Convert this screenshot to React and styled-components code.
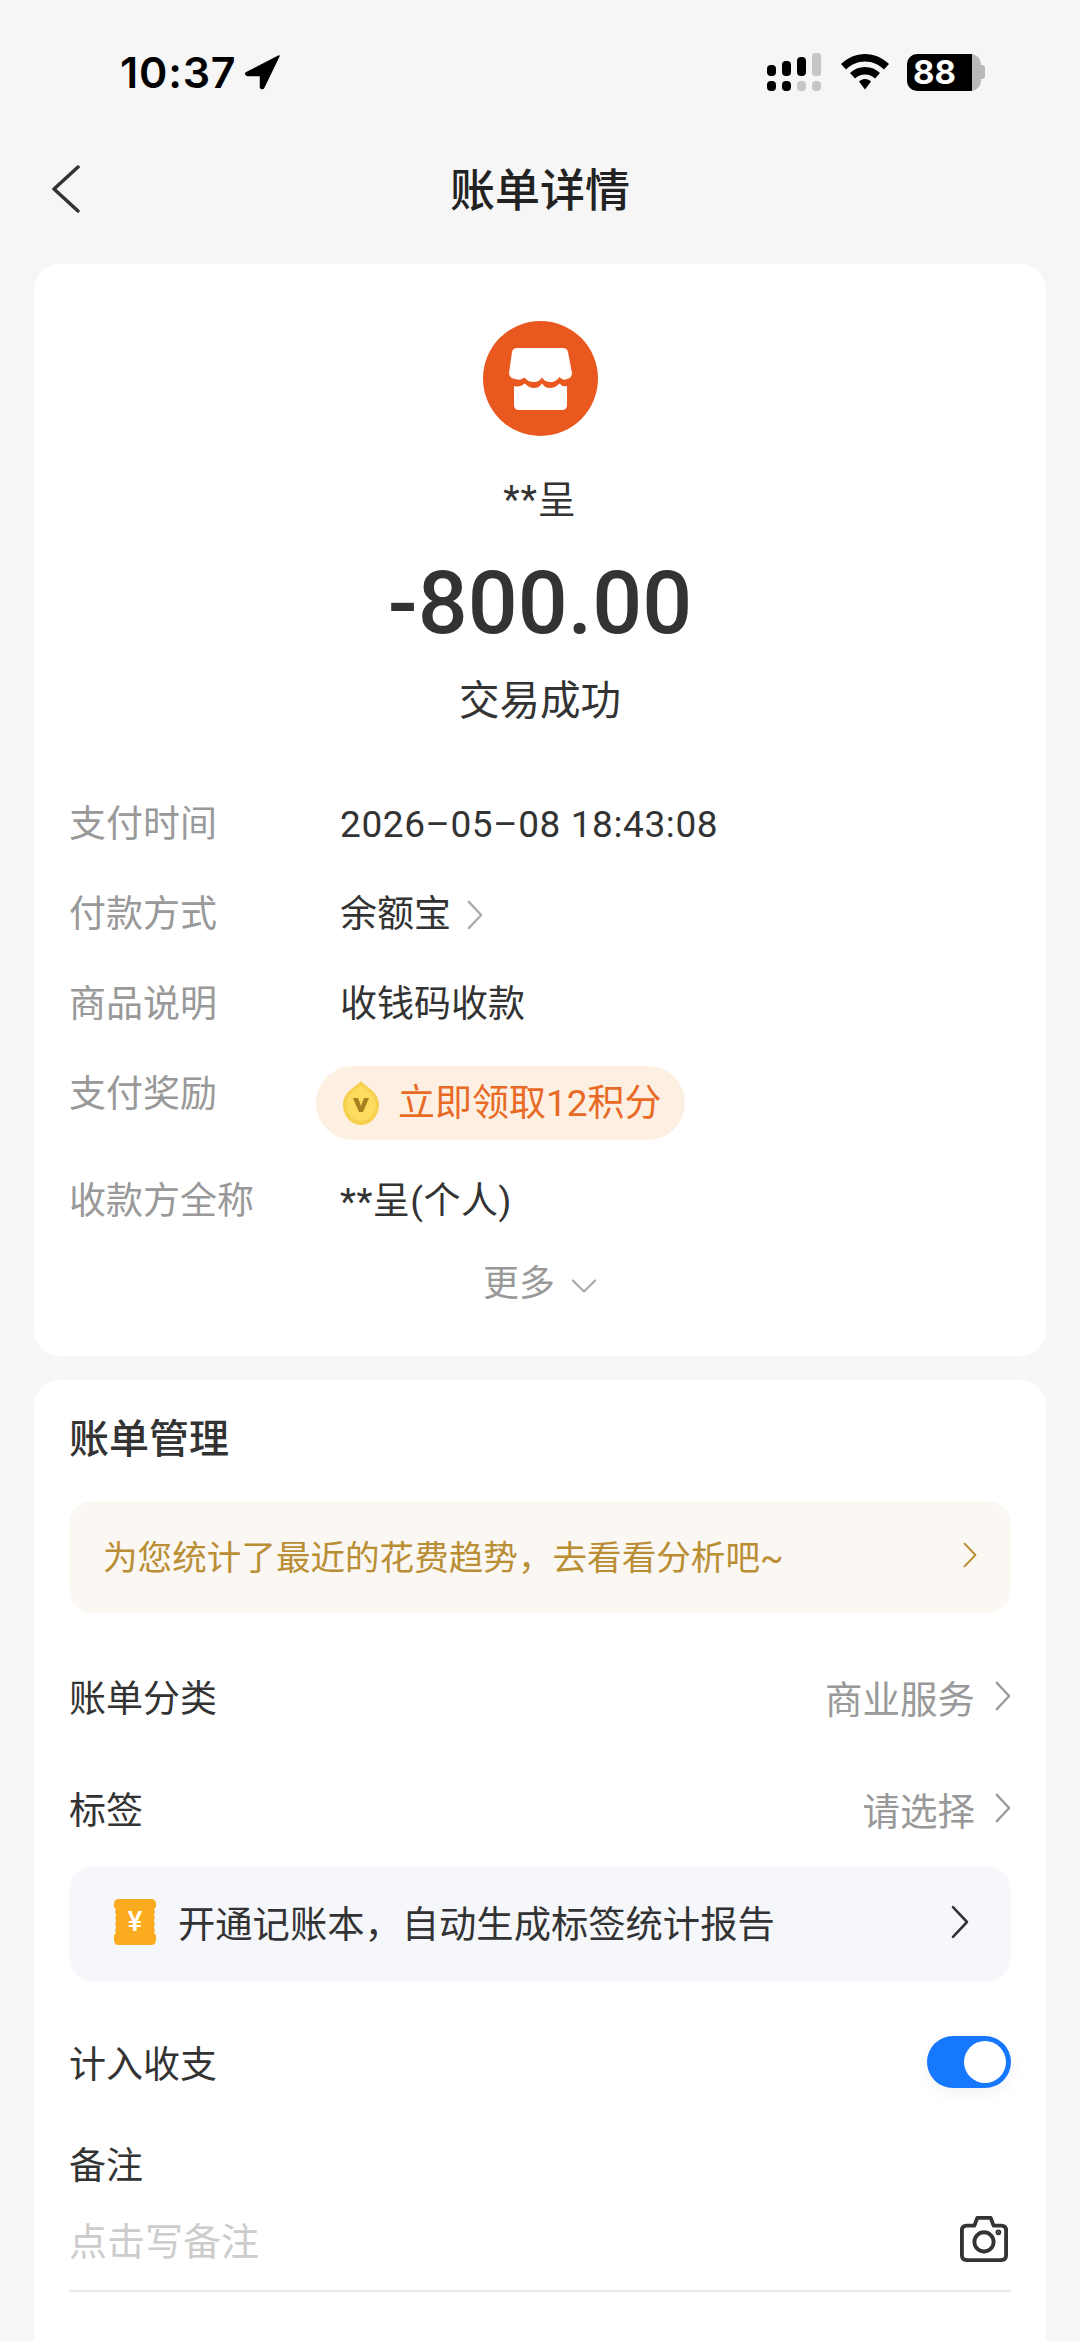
import styled, { createGlobalStyle } from 'styled-components';

const GlobalStyle = createGlobalStyle`
  html, body {
    margin: 0;
    padding: 0;
    background: #f6f6f6;
  }
  * { box-sizing: border-box; }
`;

const FONT = `Roboto, "Noto Sans CJK SC", sans-serif`;

const Page = styled.div`
  width: 1080px;
  height: 2341px;
  overflow: hidden;
  background: #f6f6f6;
  font-family: ${FONT};
  color: #333;
`;

const StatusBar = styled.div`
  height: 130px;
  padding: 50px 95px 0 120px;
  display: flex;
  justify-content: space-between;
  align-items: flex-start;
  color: #000;
`;
const TimeWrap = styled.div`
  display: flex;
  align-items: center;
  gap: 9px;
  height: 44px;
`;
const Time = styled.span`
  font-family: Inter, sans-serif;
  font-size: 43px;
  font-weight: 600;
  letter-spacing: 0.8px;
  line-height: 44px;
`;
const StatusIcons = styled.div`
  display: flex;
  align-items: center;
  gap: 18px;
  height: 44px;
`;
const Battery = styled.div`
  width: 78px;
  height: 37px;
  display: flex;
  align-items: center;
`;
const BatteryBody = styled.div`
  width: 74px;
  height: 37px;
  border-radius: 10px;
  background: linear-gradient(90deg, #000 88%, #b9b9b9 88%);
  color: #fff;
  font-family: Inter, sans-serif;
  font-size: 33px;
  font-weight: 700;
  line-height: 37px;
  padding-left: 6px;
`;
const BatteryTip = styled.div`
  width: 4px;
  height: 14px;
  border-radius: 0 3px 3px 0;
  background: #b9b9b9;
`;

const NavBar = styled.div`
  position: relative;
  height: 134px;
  padding-bottom: 20px;
  display: flex;
  align-items: center;
  justify-content: center;
`;
const BackButton = styled.div`
  position: absolute;
  left: 51px;
  top: 35px;
  display: flex;
`;
const NavTitle = styled.div`
  font-size: 45px;
  font-weight: 500;
  color: #222;
`;

const Card = styled.div`
  margin: 0 34px;
  background: #fff;
  border-radius: 26px;
`;
const SummaryCard = styled(Card)`
  padding: 57px 35px 48px;
  margin-bottom: 24px;
`;
const ManageCard = styled(Card)`
  padding: 30px 35px 80px 35px;
  border-radius: 26px 26px 0 0;
`;

const Head = styled.div`
  display: flex;
  flex-direction: column;
  align-items: center;
`;
const Payee = styled.div`
  margin-top: 42px;
  font-size: 38px;
  line-height: 44px;
  letter-spacing: 1px;
`;
const Amount = styled.div`
  margin-top: 31px;
  font-size: 88px;
  font-weight: 500;
  line-height: 100px;
  color: #333;
`;
const TradeStatus = styled.div`
  margin-top: 23px;
  font-size: 40.500px;
  line-height: 50px;
`;

const Details = styled.div`
  margin-top: 54px;
`;
const DetailRow = styled.div`
  display: flex;
  min-height: ${p => p.$height || 90}px;
`;
const DetailLabel = styled.div`
  width: 271px;
  flex-shrink: 0;
  font-size: 37px;
  line-height: 90px;
  height: 90px;
  color: #999;
`;
const DetailValue = styled.div`
  display: flex;
  align-items: center;
  gap: 16px;
  height: 90px;
  font-size: 37px;
  line-height: 90px;
  letter-spacing: ${p => p.$spacing || 0}px;
  color: #333;
`;
const RewardPill = styled.div`
  margin: 16px 0 0 -24px;
  height: 74px;
  padding: 0 23px 7px 26px;
  display: flex;
  align-items: center;
  gap: 18px;
  border-radius: 37px;
  background: #fdf0e3;
  color: #e86a25;
  font-size: 37px;
  white-space: nowrap;
`;
const MedalBox = styled.div`
  display: flex;
  margin-top: 7px;
`;
const MoreRow = styled.div`
  margin-top: 11px;
  height: 50px;
  padding-bottom: 6px;
  display: flex;
  align-items: center;
  justify-content: center;
  gap: 16px;
  font-size: 36px;
  color: #999;
`;
const MoreArrow = styled.svg`
  margin-top: 12px;
`;

const SectionTitle = styled.div`
  font-size: 40px;
  font-weight: 500;
  line-height: 60px;
`;
const Banner = styled.div`
  height: ${p => p.$height}px;
  margin-top: ${p => p.$top || 0}px;
  padding: 0 ${p => p.$right}px 5px ${p => p.$left}px;
  display: flex;
  align-items: center;
  border-radius: 24px;
  background: ${p => p.$bg};
  color: ${p => p.$color};
  font-size: ${p => p.$size}px;
`;
const BannerText = styled.div`
  flex: 1;
  white-space: nowrap;
`;
const ListRow = styled.div`
  height: ${p => p.$height}px;
  margin-top: ${p => p.$top || 0}px;
  padding-bottom: 6px;
  display: flex;
  align-items: center;
  justify-content: space-between;
  font-size: 37px;
`;
const RowValue = styled.div`
  display: flex;
  align-items: center;
  gap: 20px;
  font-size: 37.500px;
  color: #999;
`;
const Toggle = styled.div`
  width: 84px;
  height: 52px;
  padding: 5px;
  display: flex;
  justify-content: flex-end;
  border-radius: 26px;
  background: #1677ff;
  box-shadow: 0 6px 16px rgba(0, 0, 0, 0.05);
`;
const ToggleKnob = styled.div`
  width: 42px;
  height: 42px;
  border-radius: 50%;
  background: #fff;
`;
const RemarkTitle = styled.div`
  margin-top: 17px;
  font-size: 37px;
  line-height: 70px;
`;
const RemarkInput = styled.div`
  height: 90px;
  padding: 0 3px 15px 0;
  display: flex;
  align-items: center;
  justify-content: space-between;
  border-bottom: 2px solid #e9e9e9;
  font-size: 38px;
  color: #ccc;
`;
const TicketWrap = styled.div`
  position: relative;
  width: 42px;
  height: 46px;
  margin-right: 22px;
  flex-shrink: 0;
`;
const TicketSign = styled.span`
  position: absolute;
  inset: 0;
  display: flex;
  align-items: center;
  justify-content: center;
  color: #fff;
  font-size: 28px;
  font-weight: 500;
`;

const Chevron = ({ w = 18, h = 32, color = '#999', sw = 2.6 }) => (
  <svg width={w} height={h} viewBox="0 0 18 32" fill="none" preserveAspectRatio="none">
    <path d="M2 2 L16 16 L2 30" stroke={color} strokeWidth={sw} strokeLinecap="round" strokeLinejoin="round" />
  </svg>
);

const LocationArrow = () => (
  <svg width="36" height="36" viewBox="0 0 36 36">
    <path d="M34 2 L1 19 Q0 21 3 21.5 L15.5 21.5 L15.5 33 Q16 35.5 18.5 34 Z" fill="#000" stroke="#000" strokeWidth="1.5" strokeLinejoin="round" />
  </svg>
);

const Signal = () => (
  <svg width="56" height="38" viewBox="0 0 56 38">
    <g fill="#000">
      <rect x="0" y="12" width="9" height="11" rx="4" />
      <rect x="15" y="8" width="9" height="15" rx="4" />
      <rect x="30" y="4" width="9" height="19" rx="4" />
      <rect x="0" y="28" width="9" height="10" rx="4" />
      <rect x="15" y="28" width="9" height="10" rx="4" />
    </g>
    <g fill="#c6c6c6">
      <rect x="45" y="0" width="9" height="23" rx="3" />
      <rect x="30" y="28" width="9" height="10" rx="4" />
      <rect x="45" y="28" width="9" height="10" rx="4" />
    </g>
  </svg>
);

const Wifi = () => (
  <svg width="48" height="36" viewBox="0 0 48 36">
    <path d="M24 0 C33 0 41 3.5 48 10 L43 15.5 C38 10.5 31.500 7.500 24 7.500 C16.500 7.500 10 10.500 5 15.500 L0 10 C7 3.500 15 0 24 0 Z" fill="#000" />
    <path d="M24 13 C30 13 35 15 39 19 L34 24.500 C31 22 28 20.500 24 20.500 C20 20.500 17 22 14 24.500 L9 19 C13 15 18 13 24 13 Z" fill="#000" />
    <path d="M24 25 C26.500 25 28.500 26 30 27.500 L24 35.500 L18 27.500 C19.500 26 21.500 25 24 25 Z" fill="#000" />
  </svg>
);

const ShopLogo = () => (
  <svg width="115" height="115" viewBox="0 0 115 115">
    <circle cx="57.500" cy="57.500" r="57.500" fill="#e9581e" />
    <path d="M34 27 H80 Q84 27 85 31 L89 52 Q89 57 84 58 Q80 60 76.500 56 Q72 62 67 61 Q62 61 59 56.500 Q56 61 51 61 Q45 61 41.500 56.500 Q37 60 32 58 Q26 57 26 52 L29 31 Q30 27 34 27 Z" fill="#fff" />
    <path d="M31 65 Q36 67 42 62.500 Q46 67 51 67 Q56 67 59 62.500 Q62 67 67 67 Q72 67 76.500 62.500 Q79 66 84 65 V84 Q84 89 79 89 H36 Q31 89 31 84 Z" fill="#fff" />
  </svg>
);

const Medal = () => (
  <svg width="38" height="46" viewBox="0 0 38 46">
    <path d="M19 1 C22 6 36 10 37 24 C37 36 29 45 19 45 C9 45 1 36 1 24 C2 10 16 6 19 1 Z" fill="#f6cf4c" />
    <path d="M19 5 C22 9 33 13 34 24 C34 34 27 41 19 41 C11 41 4 34 4 24 C5 13 16 9 19 5 Z" fill="#fbdc5f" />
    <path d="M11 18 H16 L19 26 L22 18 H27 L21 32 H17 Z" fill="#a77f1f" />
  </svg>
);

const Ticket = () => (
  <svg width="42" height="46" viewBox="0 0 42 46" style={{ display: 'block' }}>
    <path d="M5 0 H37 Q42 0 42 5 V8 Q39 10 41 13 Q39 16 41 19 Q39 22 41 25 Q39 28 41 31 Q39 34 42 36 V41 Q42 46 37 46 H5 Q0 46 0 41 V36 Q3 34 1 31 Q3 28 1 25 Q3 22 1 19 Q3 16 1 13 Q3 10 0 8 V5 Q0 0 5 0 Z" fill="#fbab20" />
  </svg>
);

const Camera = () => (
  <svg width="48" height="48" viewBox="0 0 50 50" fill="none" stroke="#333" strokeWidth="4" strokeLinejoin="round">
    <path d="M7 11 H15 L18 3 H32 L35 11 H43 Q48 11 48 16 V42 Q48 47 43 47 H7 Q2 47 2 42 V16 Q2 11 7 11 Z" />
    <circle cx="25" cy="28" r="10" />
    <circle cx="40" cy="18" r="1" fill="#333" />
  </svg>
);

const details = [
  { label: '支付时间', value: '2026–05–08 18:43:08', spacing: 0.6 },
  { label: '付款方式', value: '余额宝', arrow: true },
  { label: '商品说明', value: '收钱码收款' },
];

function App() {
  return (
    <Page>
      <GlobalStyle />
      <StatusBar>
        <TimeWrap>
          <Time>10:37</Time>
          <LocationArrow />
        </TimeWrap>
        <StatusIcons>
          <Signal />
          <Wifi />
          <Battery>
            <BatteryBody>88</BatteryBody>
            <BatteryTip />
          </Battery>
        </StatusIcons>
      </StatusBar>

      <NavBar>
        <BackButton>
          <svg width="30" height="48" viewBox="0 0 30 48" fill="none">
            <path d="M27 2 L3 24 L27 46" stroke="#333" strokeWidth="3.500" strokeLinecap="round" strokeLinejoin="round" />
          </svg>
        </BackButton>
        <NavTitle>账单详情</NavTitle>
      </NavBar>

      <SummaryCard>
        <Head>
          <ShopLogo />
          <Payee>**呈</Payee>
          <Amount>-800.00</Amount>
          <TradeStatus>交易成功</TradeStatus>
        </Head>
        <Details>
          {details.map(d => (
            <DetailRow key={d.label}>
              <DetailLabel>{d.label}</DetailLabel>
              <DetailValue $spacing={d.spacing}>
                {d.value}
                {d.arrow && <Chevron w={16} h={30} color="#aaa" />}
              </DetailValue>
            </DetailRow>
          ))}
          <DetailRow $height={107}>
            <DetailLabel>支付奖励</DetailLabel>
            <RewardPill>
              <MedalBox>
                <Medal />
              </MedalBox>
              立即领取12积分
            </RewardPill>
          </DetailRow>
          <DetailRow>
            <DetailLabel>收款方全称</DetailLabel>
            <DetailValue $spacing={0.5}>**呈(个人)</DetailValue>
          </DetailRow>
        </Details>
        <MoreRow>
          更多
          <MoreArrow width="26" height="16" viewBox="0 0 28 16" fill="none">
            <path d="M2 2 L14 14 L26 2" stroke="#aaa" strokeWidth="2.400" strokeLinecap="round" strokeLinejoin="round" />
          </MoreArrow>
        </MoreRow>
      </SummaryCard>

      <ManageCard>
        <SectionTitle>账单管理</SectionTitle>
        <Banner $height={112} $top={31} $left={34} $right={34} $bg="#fbf7f3" $color="#b98e35" $size={34.6}>
          <BannerText>为您统计了最近的花费趋势，去看看分析吧~</BannerText>
          <Chevron w={14} h={26} color="#b98e35" />
        </Banner>
        <ListRow $height={112} $top={30}>
          账单分类
          <RowValue>
            商业服务
            <Chevron w={16} h={30} color="#999" />
          </RowValue>
        </ListRow>
        <ListRow $height={112}>
          标签
          <RowValue>
            请选择
            <Chevron w={16} h={30} color="#999" />
          </RowValue>
        </ListRow>
        <Banner $height={114} $left={45} $right={42} $bg="#f5f7fb" $color="#333" $size={37.3}>
          <TicketWrap>
            <Ticket />
            <TicketSign>¥</TicketSign>
          </TicketWrap>
          <BannerText>开通记账本，自动生成标签统计报告</BannerText>
          <Chevron w={18} h={34} color="#333" />
        </Banner>
        <ListRow $height={100} $top={34}>
          计入收支
          <Toggle>
            <ToggleKnob />
          </Toggle>
        </ListRow>
        <RemarkTitle>备注</RemarkTitle>
        <RemarkInput>
          点击写备注
          <Camera />
        </RemarkInput>
      </ManageCard>
    </Page>
  );
}

export default App;
